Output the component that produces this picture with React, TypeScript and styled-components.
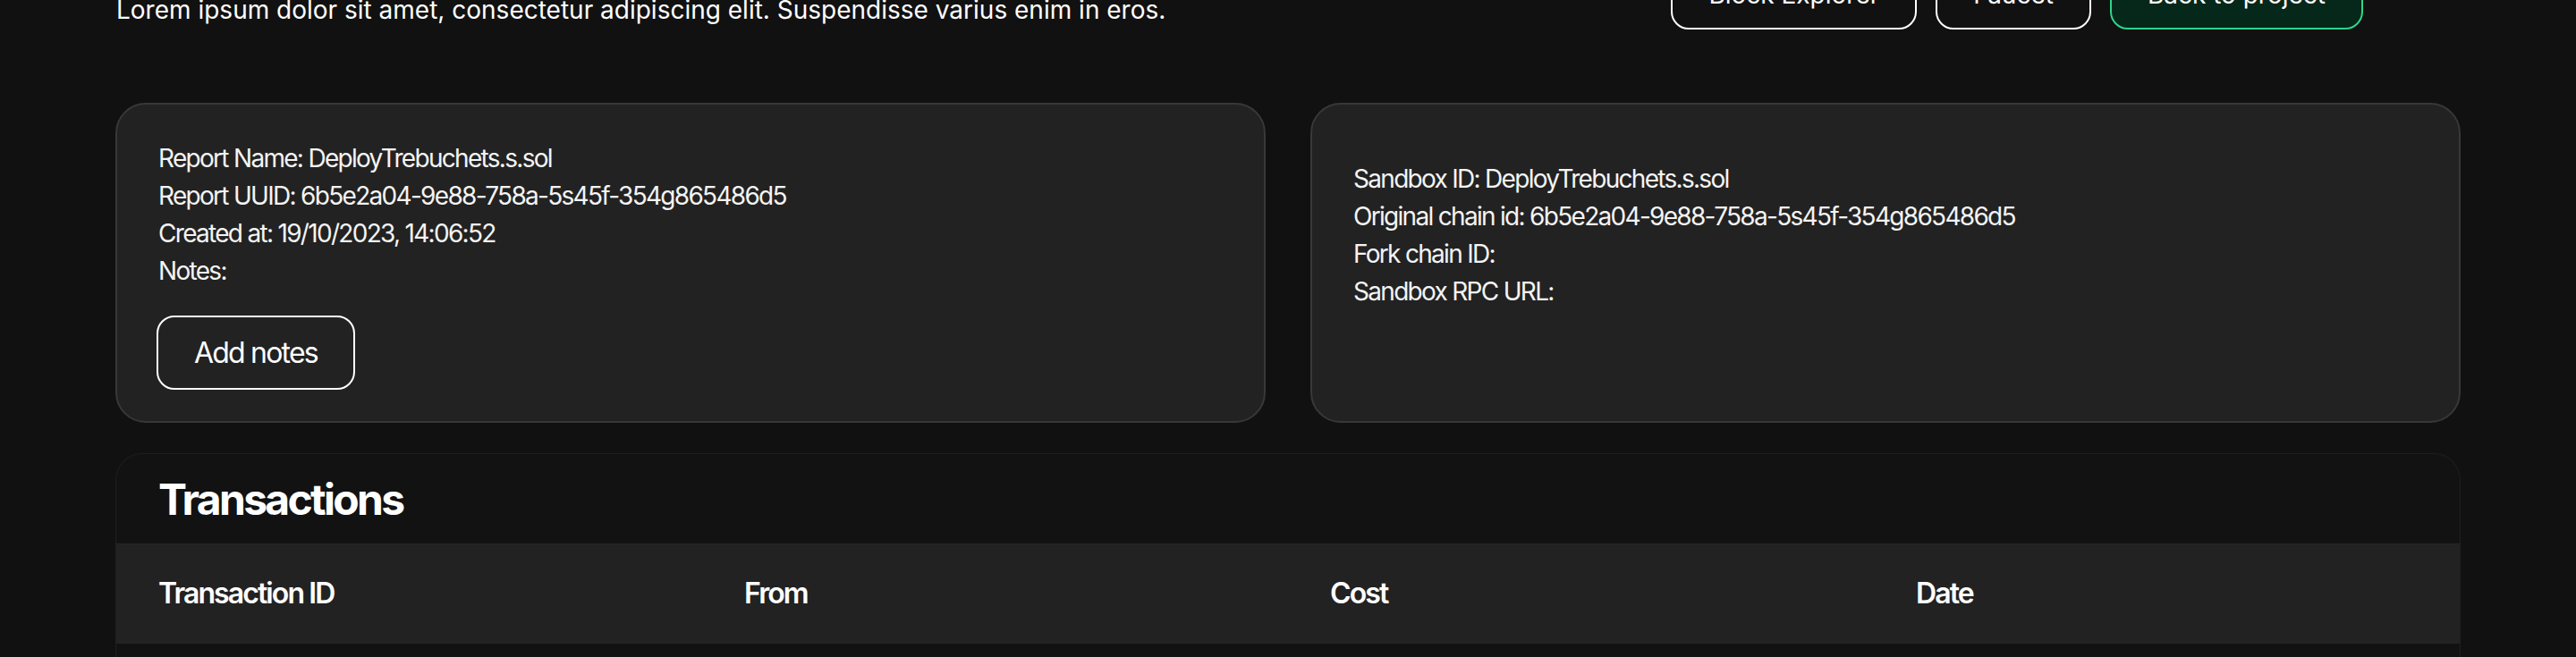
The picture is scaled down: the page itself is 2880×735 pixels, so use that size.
import React from "react";
import styled, { createGlobalStyle } from "styled-components";

const GlobalStyle = createGlobalStyle`
  html, body {
    margin: 0;
    padding: 0;
    background: #111111;
    color: #ffffff;
    font-family: "Inter", "Noto Sans", sans-serif;
  }
  * { box-sizing: border-box; }
`;

const Page = styled.main`
  padding: 0 129px;
  overflow: hidden;
`;

const Header = styled.header`
  display: flex;
  justify-content: space-between;
  align-items: flex-end;
  margin-top: -46px;
  margin-bottom: 82px;
`;

const Lead = styled.p`
  margin: 0 0 1px 1px;
  font-size: 28px;
  line-height: 42px;
  color: #ffffff;
`;

const ButtonRow = styled.div`
  display: flex;
  gap: 21px;
  margin-right: 109px;
`;

const HeaderButton = styled.button<{ $primary?: boolean }>`
  font-family: "Inter", "Noto Sans", sans-serif;
  font-size: 28px;
  line-height: 36px;
  padding: 20px 40px 19px;
  border-radius: 20px;
  color: #ffffff;
  background: ${(p) => (p.$primary ? "#06281b" : "transparent")};
  border: 2px solid ${(p) => (p.$primary ? "#30d48c" : "#ffffff")};
  cursor: pointer;
`;

const CardGrid = styled.section`
  display: grid;
  grid-template-columns: 1fr 1fr;
  gap: 50px;
`;

const Card = styled.div<{ $top: number }>`
  background: #222222;
  border: 2px solid #383838;
  border-radius: 34px;
  padding: ${(p) => p.$top}px 48px 35px 46px;
  display: flex;
  flex-direction: column;
  align-items: flex-start;
`;

const InfoLine = styled.div`
  font-size: 28px;
  line-height: 42px;
  letter-spacing: -1.7px;
  color: #f4f4f4;
`;

const OutlineButton = styled.button`
  margin-top: 29px;
  margin-left: -2px;
  font-family: "Inter", "Noto Sans", sans-serif;
  font-size: 32px;
  line-height: 39px;
  letter-spacing: -1.8px;
  padding: 20px 40px;
  border-radius: 20px;
  border: 2px solid #ffffff;
  background: transparent;
  color: #ffffff;
  cursor: pointer;
`;

const Transactions = styled.section`
  margin-top: 34px;
  background: #121212;
  border: 1px solid #1f1f1f;
  border-bottom: none;
  border-radius: 30px 30px 0 0;
  overflow: hidden;
`;

const SectionTitle = styled.h2`
  margin: 0;
  padding: 22px 47px 20px;
  font-size: 48px;
  line-height: 58px;
  font-weight: 700;
  letter-spacing: -2.7px;
`;

const TableHead = styled.div`
  display: grid;
  grid-template-columns: repeat(4, 1fr);
  background: #222222;
  border-top: 1px solid #262626;
  border-bottom: 1px solid #262626;
`;

const HeadCell = styled.div`
  padding: 31px 47px;
  font-size: 32px;
  line-height: 48px;
  font-weight: 600;
  letter-spacing: -1.9px;
`;

const TableBody = styled.div`
  height: 120px;
  background: #121212;
`;

const reportLines = [
  "Report Name: DeployTrebuchets.s.sol",
  "Report UUID: 6b5e2a04-9e88-758a-5s45f-354g865486d5",
  "Created at: 19/10/2023, 14:06:52",
  "Notes:",
];

const sandboxLines = [
  "Sandbox ID: DeployTrebuchets.s.sol",
  "Original chain id: 6b5e2a04-9e88-758a-5s45f-354g865486d5",
  "Fork chain ID:",
  "Sandbox RPC URL:",
];

const columns = ["Transaction ID", "From", "Cost", "Date"];

export default function App() {
  return (
    <>
      <GlobalStyle />
      <Page>
        <Header>
          <Lead>
            Lorem ipsum dolor sit amet, consectetur adipiscing elit. Suspendisse varius enim in eros.
          </Lead>
          <ButtonRow>
            <HeaderButton>Block Explorer</HeaderButton>
            <HeaderButton>Faucet</HeaderButton>
            <HeaderButton $primary>Back to project</HeaderButton>
          </ButtonRow>
        </Header>
        <CardGrid>
          <Card $top={39}>
            {reportLines.map((l) => (
              <InfoLine key={l}>{l}</InfoLine>
            ))}
            <OutlineButton>Add notes</OutlineButton>
          </Card>
          <Card $top={62}>
            {sandboxLines.map((l) => (
              <InfoLine key={l}>{l}</InfoLine>
            ))}
          </Card>
        </CardGrid>
        <Transactions>
          <SectionTitle>Transactions</SectionTitle>
          <TableHead>
            {columns.map((c) => (
              <HeadCell key={c}>{c}</HeadCell>
            ))}
          </TableHead>
          <TableBody />
        </Transactions>
      </Page>
    </>
  );
}
